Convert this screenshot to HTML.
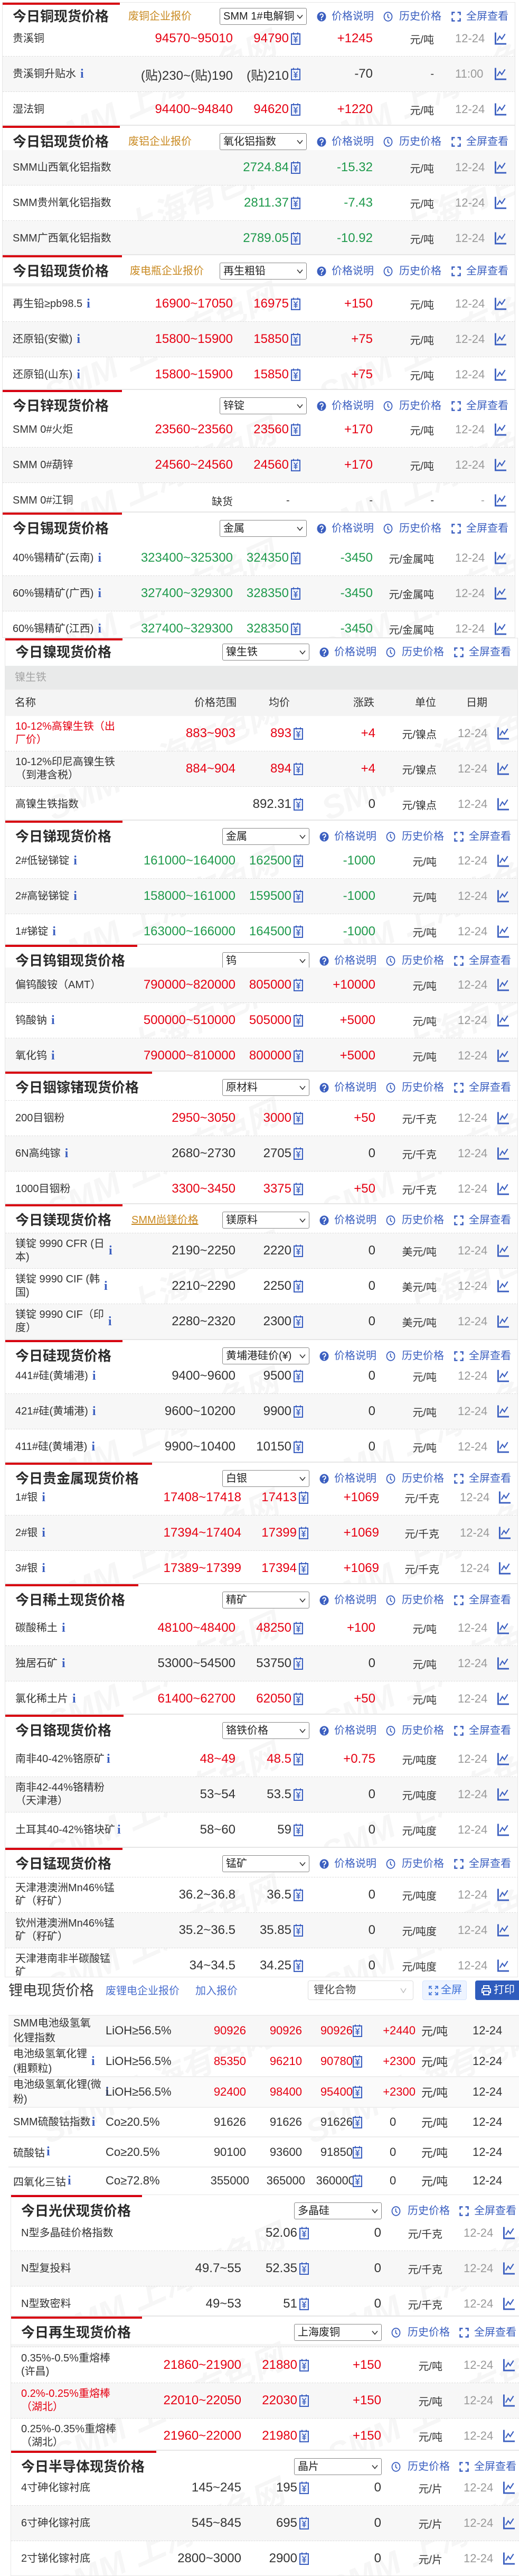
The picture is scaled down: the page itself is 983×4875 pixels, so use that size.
<!DOCTYPE html>
<html><head><meta charset="utf-8">
<style>
*{margin:0;padding:0;box-sizing:border-box}
html,body{width:983px;height:4875px;overflow:hidden;background:#fff}
body{position:relative;font-family:"Liberation Sans","Noto Sans CJK SC",sans-serif;color:#333}
.sec{position:absolute;width:972px;border:1px solid #e6e6e6;overflow:hidden;background:#fff}
.red{position:absolute;left:0;top:0;height:4px;background:#d7000f}
.tt{position:absolute;left:19px;top:12px;font-weight:bold;font-size:26px;line-height:36px;color:#2b2b2b;white-space:nowrap}
.lk{position:absolute;left:238px;top:17px;font-size:20px;line-height:26px;color:#c98a22;white-space:nowrap}
.sel{position:absolute;left:411px;top:14px;width:165px;height:32px;border:1px solid #888;border-radius:3px;font-size:20px;line-height:30px;padding-left:6px;color:#222;white-space:nowrap;overflow:hidden;background:#fff}
.sel svg{position:absolute;right:6px;top:11px;width:12px;height:9px}
.hl{position:absolute;top:17px;font-size:20px;line-height:26px;color:#3b5fc0;white-space:nowrap}
.hi{position:absolute;top:21px;width:18px;height:19px}
.rw{position:absolute;left:0;width:972px;height:67px;border-bottom:1px dashed #dcdcdc}
.gr{background:#f7f7f7}
.c{position:absolute;top:0;height:100%;display:flex;align-items:center;white-space:nowrap}
.nm{left:19px;font-size:20px;line-height:25px;color:#333}
.rg{right:536px;font-size:24px}
.av{right:430px;font-size:24px}
.yi{left:546px}
.ch{right:271px;font-size:24px}
.un{right:155px;font-size:20px;color:#333}
.dt{left:857px;font-size:22px;color:#999}
.gi{left:931px}
.yy{width:18px;height:24px}
.gg{width:23px;height:26px}
.R .rg,.R .av,.R .ch{color:#e60012}
.G .rg,.G .av,.G .ch{color:#1f9a4c}
.K .rg,.K .av,.K .ch{color:#333}
.ii{font-family:"Liberation Serif",serif;font-weight:bold;font-size:24px;color:#3b5fc0;margin-left:8px}
.wm{position:absolute;font-weight:bold;font-style:italic;font-size:62px;color:rgba(0,0,0,0.035);transform:rotate(-24deg);white-space:nowrap;pointer-events:none}
.li{position:absolute;white-space:nowrap}
.lr{position:absolute;left:16px;width:967px;border-bottom:2px solid #eee}
.lr .c{font-size:22px}
</style></head><body>
<svg width="0" height="0" style="position:absolute">
<defs>
<symbol id="ch" viewBox="0 0 24 26"><path d="M2.5 1V23.5H24" fill="none" stroke="#3b5fc0" stroke-width="3"/><path d="M6 17L11 8.5L15 14L21.5 4" fill="none" stroke="#3b5fc0" stroke-width="2.2"/></symbol>
<symbol id="yn" viewBox="0 0 18 24"><rect x="1" y="3" width="16" height="20" fill="#eef2fb" stroke="#3b5fc0" stroke-width="2"/><path d="M5 0.5v4M13 0.5v4" stroke="#3b5fc0" stroke-width="2"/><path d="M5.5 7.5L9 12L12.5 7.5M9 12v8M5.5 13.5h7M5.5 16.5h7" fill="none" stroke="#3b5fc0" stroke-width="1.6"/></symbol>
<symbol id="q" viewBox="0 0 18 19"><ellipse cx="9" cy="9.5" rx="8.5" ry="9" fill="#3b5fc0"/><path d="M6.3 7.2a2.8 2.8 0 1 1 4 2.5c-.9.5-1.3 1-1.3 2v.8" fill="none" stroke="#fff" stroke-width="2"/><circle cx="9" cy="15" r="1.3" fill="#fff"/></symbol>
<symbol id="ck" viewBox="0 0 18 19"><ellipse cx="9" cy="9.5" rx="7.5" ry="8.3" fill="none" stroke="#3b5fc0" stroke-width="1.8"/><path d="M8.5 4.5v5.5l3 2.5" fill="none" stroke="#3b5fc0" stroke-width="1.8"/></symbol>
<symbol id="fs" viewBox="0 0 18 19"><path d="M1.5 6.5V1.5h5M11.5 1.5h5v5M16.5 12.5v5h-5M6.5 17.5h-5v-5" fill="none" stroke="#3b5fc0" stroke-width="2.6"/></symbol>
<symbol id="dn" viewBox="0 0 12 9"><path d="M1 1.5L6 7.5L11 1.5" fill="none" stroke="#333" stroke-width="1.6"/></symbol>
</defs></svg>

<!-- 1 Copper -->
<div class="sec" style="top:4px;left:4px;height:233px">
<div class="wm" style="left:60px;top:120px">SMM 上海有色网</div><div class="wm" style="left:580px;top:120px">SMM 上海有色网</div>
<div class="red" style="width:222px"></div>
<div class="tt" style="top:8px">今日铜现货价格</div>
<div class="lk" style="top:13px">废铜企业报价</div>
<div class="sel" style="top:10px">SMM 1#电解铜<svg><use href="#dn"/></svg></div>
<svg class="hi" style="left:595px;top:17px"><use href="#q"/></svg><div class="hl" style="left:623px;top:13px">价格说明</div>
<svg class="hi" style="left:721px;top:17px"><use href="#ck"/></svg><div class="hl" style="left:751px;top:13px">历史价格</div>
<svg class="hi" style="left:850px;top:17px"><use href="#fs"/></svg><div class="hl" style="left:878px;top:13px">全屏查看</div>
<div class="rw R" style="top:35px"><div class="c nm">贵溪铜</div><div class="c rg">94570~95010</div><div class="c av">94790</div><div class="c yi"><svg class="yy"><use href="#yn"/></svg></div><div class="c ch">+1245</div><div class="c un">元/吨</div><div class="c dt">12-24</div><div class="c gi"><svg class="gg"><use href="#ch"/></svg></div></div>
<div class="rw K gr" style="top:102px"><div class="c nm">贵溪铜升贴水<b class="ii">i</b></div><div class="c rg">(贴)230~(贴)190</div><div class="c av">(贴)210</div><div class="c yi"><svg class="yy"><use href="#yn"/></svg></div><div class="c ch">-70</div><div class="c un">-</div><div class="c dt">11:00</div><div class="c gi"><svg class="gg"><use href="#ch"/></svg></div></div>
<div class="rw R" style="top:169px"><div class="c nm">湿法铜</div><div class="c rg">94400~94840</div><div class="c av">94620</div><div class="c yi"><svg class="yy"><use href="#yn"/></svg></div><div class="c ch">+1220</div><div class="c un">元/吨</div><div class="c dt">12-24</div><div class="c gi"><svg class="gg"><use href="#ch"/></svg></div></div>
</div>

<!-- 2 Al -->
<div class="sec" style="top:237px;left:4px;height:245px">
<div class="wm" style="left:60px;top:120px">SMM 上海有色网</div><div class="wm" style="left:580px;top:120px">SMM 上海有色网</div>
<div class="red" style="width:222px"></div>
<div class="tt">今日铝现货价格</div>
<div class="lk">废铝企业报价</div>
<div class="sel">氧化铝指数<svg><use href="#dn"/></svg></div>
<svg class="hi" style="left:595px"><use href="#q"/></svg><div class="hl" style="left:623px">价格说明</div>
<svg class="hi" style="left:721px"><use href="#ck"/></svg><div class="hl" style="left:751px">历史价格</div>
<svg class="hi" style="left:850px"><use href="#fs"/></svg><div class="hl" style="left:878px">全屏查看</div>
<div class="rw G gr" style="top:46px"><div class="c nm">SMM山西氧化铝指数</div><div class="c av">2724.84</div><div class="c yi"><svg class="yy"><use href="#yn"/></svg></div><div class="c ch">-15.32</div><div class="c un">元/吨</div><div class="c dt">12-24</div><div class="c gi"><svg class="gg"><use href="#ch"/></svg></div></div>
<div class="rw G" style="top:113px"><div class="c nm">SMM贵州氧化铝指数</div><div class="c av">2811.37</div><div class="c yi"><svg class="yy"><use href="#yn"/></svg></div><div class="c ch">-7.43</div><div class="c un">元/吨</div><div class="c dt">12-24</div><div class="c gi"><svg class="gg"><use href="#ch"/></svg></div></div>
<div class="rw G gr" style="top:180px"><div class="c nm">SMM广西氧化铝指数</div><div class="c av">2789.05</div><div class="c yi"><svg class="yy"><use href="#yn"/></svg></div><div class="c ch">-10.92</div><div class="c un">元/吨</div><div class="c dt">12-24</div><div class="c gi"><svg class="gg"><use href="#ch"/></svg></div></div>
</div>

<!-- 3 Lead -->
<div class="sec" style="top:482px;left:4px;height:255px">
<div class="wm" style="left:60px;top:120px">SMM 上海有色网</div><div class="wm" style="left:580px;top:120px">SMM 上海有色网</div>
<div class="red" style="width:226px"></div>
<div class="tt">今日铅现货价格</div>
<div class="lk" style="left:241px">废电瓶企业报价</div>
<div class="sel">再生粗铅<svg><use href="#dn"/></svg></div>
<svg class="hi" style="left:595px"><use href="#q"/></svg><div class="hl" style="left:623px">价格说明</div>
<svg class="hi" style="left:721px"><use href="#ck"/></svg><div class="hl" style="left:751px">历史价格</div>
<svg class="hi" style="left:850px"><use href="#fs"/></svg><div class="hl" style="left:878px">全屏查看</div>
<div style="position:absolute;left:0;top:53px;width:972px;height:6px;background:#f2f2f2"></div>
<div class="rw R" style="top:59px"><div class="c nm">再生铅≥pb98.5<b class="ii">i</b></div><div class="c rg">16900~17050</div><div class="c av">16975</div><div class="c yi"><svg class="yy"><use href="#yn"/></svg></div><div class="c ch">+150</div><div class="c un">元/吨</div><div class="c dt">12-24</div><div class="c gi"><svg class="gg"><use href="#ch"/></svg></div></div>
<div class="rw R gr" style="top:126px"><div class="c nm">还原铅(安徽)<b class="ii">i</b></div><div class="c rg">15800~15900</div><div class="c av">15850</div><div class="c yi"><svg class="yy"><use href="#yn"/></svg></div><div class="c ch">+75</div><div class="c un">元/吨</div><div class="c dt">12-24</div><div class="c gi"><svg class="gg"><use href="#ch"/></svg></div></div>
<div class="rw R" style="top:193px"><div class="c nm">还原铅(山东)<b class="ii">i</b></div><div class="c rg">15800~15900</div><div class="c av">15850</div><div class="c yi"><svg class="yy"><use href="#yn"/></svg></div><div class="c ch">+75</div><div class="c un">元/吨</div><div class="c dt">12-24</div><div class="c gi"><svg class="gg"><use href="#ch"/></svg></div></div>
</div>

<!-- 4 Zinc -->
<div class="sec" style="top:737px;left:4px;height:232px">
<div class="wm" style="left:60px;top:120px">SMM 上海有色网</div><div class="wm" style="left:580px;top:120px">SMM 上海有色网</div>
<div class="red" style="width:226px"></div>
<div class="tt">今日锌现货价格</div>
<div class="sel">锌锭<svg><use href="#dn"/></svg></div>
<svg class="hi" style="left:595px"><use href="#q"/></svg><div class="hl" style="left:623px">价格说明</div>
<svg class="hi" style="left:721px"><use href="#ck"/></svg><div class="hl" style="left:751px">历史价格</div>
<svg class="hi" style="left:850px"><use href="#fs"/></svg><div class="hl" style="left:878px">全屏查看</div>
<div class="rw R" style="top:42px"><div class="c nm">SMM 0#火炬</div><div class="c rg">23560~23560</div><div class="c av">23560</div><div class="c yi"><svg class="yy"><use href="#yn"/></svg></div><div class="c ch">+170</div><div class="c un">元/吨</div><div class="c dt">12-24</div><div class="c gi"><svg class="gg"><use href="#ch"/></svg></div></div>
<div class="rw R gr" style="top:109px"><div class="c nm">SMM 0#葫锌</div><div class="c rg">24560~24560</div><div class="c av">24560</div><div class="c yi"><svg class="yy"><use href="#yn"/></svg></div><div class="c ch">+170</div><div class="c un">元/吨</div><div class="c dt">12-24</div><div class="c gi"><svg class="gg"><use href="#ch"/></svg></div></div>
<div class="rw K" style="top:176px"><div class="c nm">SMM 0#江铜</div><div class="c rg" style="font-size:20px">缺货</div><div class="c" style="left:537px;font-size:20px">-</div><div class="c ch" style="font-size:20px">-</div><div class="c un">-</div><div class="c" style="left:906px;font-size:20px;color:#999">-</div><div class="c gi"><svg class="gg"><use href="#ch"/></svg></div></div>
</div>

<!-- 5 Tin -->
<div class="sec" style="top:969px;left:4px;height:238px">
<div class="wm" style="left:60px;top:120px">SMM 上海有色网</div><div class="wm" style="left:580px;top:120px">SMM 上海有色网</div>
<div class="red" style="width:226px"></div>
<div class="tt">今日锡现货价格</div>
<div class="sel">金属<svg><use href="#dn"/></svg></div>
<svg class="hi" style="left:595px"><use href="#q"/></svg><div class="hl" style="left:623px">价格说明</div>
<svg class="hi" style="left:721px"><use href="#ck"/></svg><div class="hl" style="left:751px">历史价格</div>
<svg class="hi" style="left:850px"><use href="#fs"/></svg><div class="hl" style="left:878px">全屏查看</div>
<div class="rw G" style="top:53px"><div class="c nm">40%锡精矿(云南)<b class="ii">i</b></div><div class="c rg">323400~325300</div><div class="c av">324350</div><div class="c yi"><svg class="yy"><use href="#yn"/></svg></div><div class="c ch">-3450</div><div class="c un">元/金属吨</div><div class="c dt">12-24</div><div class="c gi"><svg class="gg"><use href="#ch"/></svg></div></div>
<div class="rw G gr" style="top:120px"><div class="c nm">60%锡精矿(广西)<b class="ii">i</b></div><div class="c rg">327400~329300</div><div class="c av">328350</div><div class="c yi"><svg class="yy"><use href="#yn"/></svg></div><div class="c ch">-3450</div><div class="c un">元/金属吨</div><div class="c dt">12-24</div><div class="c gi"><svg class="gg"><use href="#ch"/></svg></div></div>
<div class="rw G" style="top:187px"><div class="c nm">60%锡精矿(江西)<b class="ii">i</b></div><div class="c rg">327400~329300</div><div class="c av">328350</div><div class="c yi"><svg class="yy"><use href="#yn"/></svg></div><div class="c ch">-3450</div><div class="c un">元/金属吨</div><div class="c dt">12-24</div><div class="c gi"><svg class="gg"><use href="#ch"/></svg></div></div>
</div>

<!-- 6 Ni -->
<div class="sec" style="top:1207px;left:9px;height:345px">
<div class="wm" style="left:60px;top:180px">SMM 上海有色网</div><div class="wm" style="left:580px;top:180px">SMM 上海有色网</div>
<div class="red" style="width:222px"></div>
<div class="tt" style="top:8px">今日镍现货价格</div>
<div class="sel" style="top:10px">镍生铁<svg><use href="#dn"/></svg></div>
<svg class="hi" style="left:595px;top:17px"><use href="#q"/></svg><div class="hl" style="left:623px;top:13px">价格说明</div>
<svg class="hi" style="left:721px;top:17px"><use href="#ck"/></svg><div class="hl" style="left:751px;top:13px">历史价格</div>
<svg class="hi" style="left:850px;top:17px"><use href="#fs"/></svg><div class="hl" style="left:878px;top:13px">全屏查看</div>
<div style="position:absolute;left:0;top:52px;width:972px;height:45px;background:#e9eaea;font-size:20px;line-height:45px;color:#a5a5a5;padding-left:18px">镍生铁</div>
<div style="position:absolute;left:0;top:97px;width:972px;height:50px;background:#f4f4f4;font-size:20px;line-height:50px;color:#333">
<span style="position:absolute;left:18px">名称</span><span style="position:absolute;left:358px">价格范围</span><span style="position:absolute;left:499px">均价</span><span style="position:absolute;left:659px">涨跌</span><span style="position:absolute;left:776px">单位</span><span style="position:absolute;left:873px">日期</span></div>
<div class="rw R" style="top:147px"><div class="c nm" style="color:#e60012">10-12%高镍生铁（出<br>厂价）</div><div class="c rg">883~903</div><div class="c av">893</div><div class="c yi"><svg class="yy"><use href="#yn"/></svg></div><div class="c ch">+4</div><div class="c un">元/镍点</div><div class="c dt">12-24</div><div class="c gi"><svg class="gg"><use href="#ch"/></svg></div></div>
<div class="rw R gr" style="top:214px"><div class="c nm">10-12%印尼高镍生铁<br>（到港含税）</div><div class="c rg">884~904</div><div class="c av">894</div><div class="c yi"><svg class="yy"><use href="#yn"/></svg></div><div class="c ch">+4</div><div class="c un">元/镍点</div><div class="c dt">12-24</div><div class="c gi"><svg class="gg"><use href="#ch"/></svg></div></div>
<div class="rw K" style="top:281px"><div class="c nm">高镍生铁指数</div><div class="c av">892.31</div><div class="c yi"><svg class="yy"><use href="#yn"/></svg></div><div class="c ch">0</div><div class="c un">元/镍点</div><div class="c dt">12-24</div><div class="c gi"><svg class="gg"><use href="#ch"/></svg></div></div>
</div>

<!-- 7 Sb -->
<div class="sec" style="top:1552px;left:9px;height:235px">
<div class="wm" style="left:60px;top:120px">SMM 上海有色网</div><div class="wm" style="left:580px;top:120px">SMM 上海有色网</div>
<div class="red" style="width:222px"></div>
<div class="tt">今日锑现货价格</div>
<div class="sel">金属<svg><use href="#dn"/></svg></div>
<svg class="hi" style="left:595px"><use href="#q"/></svg><div class="hl" style="left:623px">价格说明</div>
<svg class="hi" style="left:721px"><use href="#ck"/></svg><div class="hl" style="left:751px">历史价格</div>
<svg class="hi" style="left:850px"><use href="#fs"/></svg><div class="hl" style="left:878px">全屏查看</div>
<div class="rw G" style="top:43px"><div class="c nm">2#低铋锑锭<b class="ii">i</b></div><div class="c rg">161000~164000</div><div class="c av">162500</div><div class="c yi"><svg class="yy"><use href="#yn"/></svg></div><div class="c ch">-1000</div><div class="c un">元/吨</div><div class="c dt">12-24</div><div class="c gi"><svg class="gg"><use href="#ch"/></svg></div></div>
<div class="rw G gr" style="top:110px"><div class="c nm">2#高铋锑锭<b class="ii">i</b></div><div class="c rg">158000~161000</div><div class="c av">159500</div><div class="c yi"><svg class="yy"><use href="#yn"/></svg></div><div class="c ch">-1000</div><div class="c un">元/吨</div><div class="c dt">12-24</div><div class="c gi"><svg class="gg"><use href="#ch"/></svg></div></div>
<div class="rw G" style="top:177px"><div class="c nm">1#锑锭<b class="ii">i</b></div><div class="c rg">163000~166000</div><div class="c av">164500</div><div class="c yi"><svg class="yy"><use href="#yn"/></svg></div><div class="c ch">-1000</div><div class="c un">元/吨</div><div class="c dt">12-24</div><div class="c gi"><svg class="gg"><use href="#ch"/></svg></div></div>
</div>

<!-- 8 W -->
<div class="sec" style="top:1787px;left:9px;height:240px">
<div class="wm" style="left:60px;top:120px">SMM 上海有色网</div><div class="wm" style="left:580px;top:120px">SMM 上海有色网</div>
<div class="red" style="width:250px"></div>
<div class="tt">今日钨钼现货价格</div>
<div class="sel">钨<svg><use href="#dn"/></svg></div>
<svg class="hi" style="left:595px"><use href="#q"/></svg><div class="hl" style="left:623px">价格说明</div>
<svg class="hi" style="left:721px"><use href="#ck"/></svg><div class="hl" style="left:751px">历史价格</div>
<svg class="hi" style="left:850px"><use href="#fs"/></svg><div class="hl" style="left:878px">全屏查看</div>
<div class="rw R gr" style="top:43px"><div class="c nm">偏钨酸铵（AMT）</div><div class="c rg">790000~820000</div><div class="c av">805000</div><div class="c yi"><svg class="yy"><use href="#yn"/></svg></div><div class="c ch">+10000</div><div class="c un">元/吨</div><div class="c dt">12-24</div><div class="c gi"><svg class="gg"><use href="#ch"/></svg></div></div>
<div class="rw R" style="top:110px"><div class="c nm">钨酸钠<b class="ii">i</b></div><div class="c rg">500000~510000</div><div class="c av">505000</div><div class="c yi"><svg class="yy"><use href="#yn"/></svg></div><div class="c ch">+5000</div><div class="c un">元/吨</div><div class="c dt">12-24</div><div class="c gi"><svg class="gg"><use href="#ch"/></svg></div></div>
<div class="rw R gr" style="top:177px"><div class="c nm">氧化钨<b class="ii">i</b></div><div class="c rg">790000~810000</div><div class="c av">800000</div><div class="c yi"><svg class="yy"><use href="#yn"/></svg></div><div class="c ch">+5000</div><div class="c un">元/吨</div><div class="c dt">12-24</div><div class="c gi"><svg class="gg"><use href="#ch"/></svg></div></div>
</div>

<!-- 9 In -->
<div class="sec" style="top:2027px;left:9px;height:251px">
<div class="wm" style="left:60px;top:120px">SMM 上海有色网</div><div class="wm" style="left:580px;top:120px">SMM 上海有色网</div>
<div class="red" style="width:278px"></div>
<div class="tt">今日铟镓锗现货价格</div>
<div class="sel">原材料<svg><use href="#dn"/></svg></div>
<svg class="hi" style="left:595px"><use href="#q"/></svg><div class="hl" style="left:623px">价格说明</div>
<svg class="hi" style="left:721px"><use href="#ck"/></svg><div class="hl" style="left:751px">历史价格</div>
<svg class="hi" style="left:850px"><use href="#fs"/></svg><div class="hl" style="left:878px">全屏查看</div>
<div style="position:absolute;left:0;top:54px;width:972px;border-top:1px dashed #dcdcdc"></div>
<div class="rw R" style="top:55px"><div class="c nm">200目铟粉</div><div class="c rg">2950~3050</div><div class="c av">3000</div><div class="c yi"><svg class="yy"><use href="#yn"/></svg></div><div class="c ch">+50</div><div class="c un">元/千克</div><div class="c dt">12-24</div><div class="c gi"><svg class="gg"><use href="#ch"/></svg></div></div>
<div class="rw K gr" style="top:122px"><div class="c nm">6N高纯镓<b class="ii">i</b></div><div class="c rg">2680~2730</div><div class="c av">2705</div><div class="c yi"><svg class="yy"><use href="#yn"/></svg></div><div class="c ch">0</div><div class="c un">元/千克</div><div class="c dt">12-24</div><div class="c gi"><svg class="gg"><use href="#ch"/></svg></div></div>
<div class="rw R" style="top:189px"><div class="c nm">1000目铟粉</div><div class="c rg">3300~3450</div><div class="c av">3375</div><div class="c yi"><svg class="yy"><use href="#yn"/></svg></div><div class="c ch">+50</div><div class="c un">元/千克</div><div class="c dt">12-24</div><div class="c gi"><svg class="gg"><use href="#ch"/></svg></div></div>
</div>

<!-- 10 Mg -->
<div class="sec" style="top:2278px;left:9px;height:257px">
<div class="wm" style="left:60px;top:120px">SMM 上海有色网</div><div class="wm" style="left:580px;top:120px">SMM 上海有色网</div>
<div class="red" style="width:222px"></div>
<div class="tt">今日镁现货价格</div>
<div class="lk" style="left:239px;text-decoration:underline">SMM尚镁价格</div>
<div class="sel">镁原料<svg><use href="#dn"/></svg></div>
<svg class="hi" style="left:595px"><use href="#q"/></svg><div class="hl" style="left:623px">价格说明</div>
<svg class="hi" style="left:721px"><use href="#ck"/></svg><div class="hl" style="left:751px">历史价格</div>
<svg class="hi" style="left:850px"><use href="#fs"/></svg><div class="hl" style="left:878px">全屏查看</div>
<div style="position:absolute;left:0;top:54px;width:972px;border-top:1px dashed #dcdcdc"></div>
<div class="rw K gr" style="top:55px"><div class="c nm">镁锭 9990 CFR (日<br>本)<b class="ii">i</b></div><div class="c rg">2190~2250</div><div class="c av">2220</div><div class="c yi"><svg class="yy"><use href="#yn"/></svg></div><div class="c ch">0</div><div class="c un">美元/吨</div><div class="c dt">12-24</div><div class="c gi"><svg class="gg"><use href="#ch"/></svg></div></div>
<div class="rw K" style="top:122px"><div class="c nm">镁锭 9990 CIF (韩<br>国)<b class="ii">i</b></div><div class="c rg">2210~2290</div><div class="c av">2250</div><div class="c yi"><svg class="yy"><use href="#yn"/></svg></div><div class="c ch">0</div><div class="c un">美元/吨</div><div class="c dt">12-24</div><div class="c gi"><svg class="gg"><use href="#ch"/></svg></div></div>
<div class="rw K gr" style="top:189px"><div class="c nm">镁锭 9990 CIF（印<br>度）<b class="ii">i</b></div><div class="c rg">2280~2320</div><div class="c av">2300</div><div class="c yi"><svg class="yy"><use href="#yn"/></svg></div><div class="c ch">0</div><div class="c un">美元/吨</div><div class="c dt">12-24</div><div class="c gi"><svg class="gg"><use href="#ch"/></svg></div></div>
</div>

<!-- 11 Si -->
<div class="sec" style="top:2535px;left:9px;height:232px">
<div class="wm" style="left:60px;top:120px">SMM 上海有色网</div><div class="wm" style="left:580px;top:120px">SMM 上海有色网</div>
<div class="red" style="width:222px"></div>
<div class="tt">今日硅现货价格</div>
<div class="sel">黄埔港硅价(¥)<svg><use href="#dn"/></svg></div>
<svg class="hi" style="left:595px"><use href="#q"/></svg><div class="hl" style="left:623px">价格说明</div>
<svg class="hi" style="left:721px"><use href="#ck"/></svg><div class="hl" style="left:751px">历史价格</div>
<svg class="hi" style="left:850px"><use href="#fs"/></svg><div class="hl" style="left:878px">全屏查看</div>
<div class="rw K" style="top:35px"><div class="c nm">441#硅(黄埔港)<b class="ii">i</b></div><div class="c rg">9400~9600</div><div class="c av">9500</div><div class="c yi"><svg class="yy"><use href="#yn"/></svg></div><div class="c ch">0</div><div class="c un">元/吨</div><div class="c dt">12-24</div><div class="c gi"><svg class="gg"><use href="#ch"/></svg></div></div>
<div class="rw K gr" style="top:102px"><div class="c nm">421#硅(黄埔港)<b class="ii">i</b></div><div class="c rg">9600~10200</div><div class="c av">9900</div><div class="c yi"><svg class="yy"><use href="#yn"/></svg></div><div class="c ch">0</div><div class="c un">元/吨</div><div class="c dt">12-24</div><div class="c gi"><svg class="gg"><use href="#ch"/></svg></div></div>
<div class="rw K" style="top:169px"><div class="c nm">411#硅(黄埔港)<b class="ii">i</b></div><div class="c rg">9900~10400</div><div class="c av">10150</div><div class="c yi"><svg class="yy"><use href="#yn"/></svg></div><div class="c ch">0</div><div class="c un">元/吨</div><div class="c dt">12-24</div><div class="c gi"><svg class="gg"><use href="#ch"/></svg></div></div>
</div>

<!-- 12 Ag -->
<div class="sec" style="top:2767px;left:9px;height:230px">
<div class="wm" style="left:60px;top:120px">SMM 上海有色网</div><div class="wm" style="left:580px;top:120px">SMM 上海有色网</div>
<div class="red" style="width:278px"></div>
<div class="tt">今日贵金属现货价格</div>
<div class="sel">白银<svg><use href="#dn"/></svg></div>
<svg class="hi" style="left:595px"><use href="#q"/></svg><div class="hl" style="left:623px">价格说明</div>
<svg class="hi" style="left:721px"><use href="#ck"/></svg><div class="hl" style="left:751px">历史价格</div>
<svg class="hi" style="left:850px"><use href="#fs"/></svg><div class="hl" style="left:878px">全屏查看</div>
<div class="rw R" style="top:33px"><div class="c nm">1#银<b class="ii">i</b></div><div class="c rg" style="right:525px">17408~17418</div><div class="c av" style="right:420px">17413</div><div class="c yi" style="left:556px"><svg class="yy"><use href="#yn"/></svg></div><div class="c ch" style="right:264px">+1069</div><div class="c un" style="right:150px">元/千克</div><div class="c dt" style="left:861px">12-24</div><div class="c gi" style="left:934px"><svg class="gg"><use href="#ch"/></svg></div></div>
<div class="rw R gr" style="top:100px"><div class="c nm">2#银<b class="ii">i</b></div><div class="c rg" style="right:525px">17394~17404</div><div class="c av" style="right:420px">17399</div><div class="c yi" style="left:556px"><svg class="yy"><use href="#yn"/></svg></div><div class="c ch" style="right:264px">+1069</div><div class="c un" style="right:150px">元/千克</div><div class="c dt" style="left:861px">12-24</div><div class="c gi" style="left:934px"><svg class="gg"><use href="#ch"/></svg></div></div>
<div class="rw R" style="top:167px"><div class="c nm">3#银<b class="ii">i</b></div><div class="c rg" style="right:525px">17389~17399</div><div class="c av" style="right:420px">17394</div><div class="c yi" style="left:556px"><svg class="yy"><use href="#yn"/></svg></div><div class="c ch" style="right:264px">+1069</div><div class="c un" style="right:150px">元/千克</div><div class="c dt" style="left:861px">12-24</div><div class="c gi" style="left:934px"><svg class="gg"><use href="#ch"/></svg></div></div>
</div>

<!-- 13 RE -->
<div class="sec" style="top:2997px;left:9px;height:247px">
<div class="wm" style="left:60px;top:120px">SMM 上海有色网</div><div class="wm" style="left:580px;top:120px">SMM 上海有色网</div>
<div class="red" style="width:252px"></div>
<div class="tt">今日稀土现货价格</div>
<div class="sel">精矿<svg><use href="#dn"/></svg></div>
<svg class="hi" style="left:595px"><use href="#q"/></svg><div class="hl" style="left:623px">价格说明</div>
<svg class="hi" style="left:721px"><use href="#ck"/></svg><div class="hl" style="left:751px">历史价格</div>
<svg class="hi" style="left:850px"><use href="#fs"/></svg><div class="hl" style="left:878px">全屏查看</div>
<div class="rw R" style="top:50px"><div class="c nm">碳酸稀土<b class="ii">i</b></div><div class="c rg">48100~48400</div><div class="c av">48250</div><div class="c yi"><svg class="yy"><use href="#yn"/></svg></div><div class="c ch">+100</div><div class="c un">元/吨</div><div class="c dt">12-24</div><div class="c gi"><svg class="gg"><use href="#ch"/></svg></div></div>
<div class="rw K gr" style="top:117px"><div class="c nm">独居石矿<b class="ii">i</b></div><div class="c rg">53000~54500</div><div class="c av">53750</div><div class="c yi"><svg class="yy"><use href="#yn"/></svg></div><div class="c ch">0</div><div class="c un">元/吨</div><div class="c dt">12-24</div><div class="c gi"><svg class="gg"><use href="#ch"/></svg></div></div>
<div class="rw R" style="top:184px"><div class="c nm">氯化稀土片<b class="ii">i</b></div><div class="c rg">61400~62700</div><div class="c av">62050</div><div class="c yi"><svg class="yy"><use href="#yn"/></svg></div><div class="c ch">+50</div><div class="c un">元/吨</div><div class="c dt">12-24</div><div class="c gi"><svg class="gg"><use href="#ch"/></svg></div></div>
</div>

<!-- 14 Cr -->
<div class="sec" style="top:3244px;left:9px;height:252px">
<div class="wm" style="left:60px;top:120px">SMM 上海有色网</div><div class="wm" style="left:580px;top:120px">SMM 上海有色网</div>
<div class="red" style="width:224px"></div>
<div class="tt">今日铬现货价格</div>
<div class="sel">铬铁价格<svg><use href="#dn"/></svg></div>
<svg class="hi" style="left:595px"><use href="#q"/></svg><div class="hl" style="left:623px">价格说明</div>
<svg class="hi" style="left:721px"><use href="#ck"/></svg><div class="hl" style="left:751px">历史价格</div>
<svg class="hi" style="left:850px"><use href="#fs"/></svg><div class="hl" style="left:878px">全屏查看</div>
<div class="rw R" style="top:51px"><div class="c nm">南非40-42%铬原矿<br><b class="ii" style="margin-left:4px">i</b></div><div class="c rg">48~49</div><div class="c av">48.5</div><div class="c yi"><svg class="yy"><use href="#yn"/></svg></div><div class="c ch">+0.75</div><div class="c un">元/吨度</div><div class="c dt">12-24</div><div class="c gi"><svg class="gg"><use href="#ch"/></svg></div></div>
<div class="rw K gr" style="top:118px"><div class="c nm">南非42-44%铬精粉<br>（天津港）</div><div class="c rg">53~54</div><div class="c av">53.5</div><div class="c yi"><svg class="yy"><use href="#yn"/></svg></div><div class="c ch">0</div><div class="c un">元/吨度</div><div class="c dt">12-24</div><div class="c gi"><svg class="gg"><use href="#ch"/></svg></div></div>
<div class="rw K" style="top:185px"><div class="c nm">土耳其40-42%铬块矿<br><b class="ii" style="margin-left:4px">i</b></div><div class="c rg">58~60</div><div class="c av">59</div><div class="c yi"><svg class="yy"><use href="#yn"/></svg></div><div class="c ch">0</div><div class="c un">元/吨度</div><div class="c dt">12-24</div><div class="c gi"><svg class="gg"><use href="#ch"/></svg></div></div>
</div>

<!-- 15 Mn -->
<div class="sec" style="top:3496px;left:9px;height:246px">
<div class="wm" style="left:60px;top:120px">SMM 上海有色网</div><div class="wm" style="left:580px;top:120px">SMM 上海有色网</div>
<div class="red" style="width:222px"></div>
<div class="tt">今日锰现货价格</div>
<div class="sel">锰矿<svg><use href="#dn"/></svg></div>
<svg class="hi" style="left:595px"><use href="#q"/></svg><div class="hl" style="left:623px">价格说明</div>
<svg class="hi" style="left:721px"><use href="#ck"/></svg><div class="hl" style="left:751px">历史价格</div>
<svg class="hi" style="left:850px"><use href="#fs"/></svg><div class="hl" style="left:878px">全屏查看</div>
<div style="position:absolute;left:0;top:55px;width:972px;border-top:1px dashed #dcdcdc"></div>
<div class="rw K" style="top:56px"><div class="c nm">天津港澳洲Mn46%锰<br>矿（籽矿）</div><div class="c rg">36.2~36.8</div><div class="c av">36.5</div><div class="c yi"><svg class="yy"><use href="#yn"/></svg></div><div class="c ch">0</div><div class="c un">元/吨度</div><div class="c dt">12-24</div><div class="c gi"><svg class="gg"><use href="#ch"/></svg></div></div>
<div class="rw K gr" style="top:123px"><div class="c nm">钦州港澳洲Mn46%锰<br>矿（籽矿）</div><div class="c rg">35.2~36.5</div><div class="c av">35.85</div><div class="c yi"><svg class="yy"><use href="#yn"/></svg></div><div class="c ch">0</div><div class="c un">元/吨度</div><div class="c dt">12-24</div><div class="c gi"><svg class="gg"><use href="#ch"/></svg></div></div>
<div class="rw K" style="top:190px"><div class="c nm">天津港南非半碳酸锰<br>矿</div><div class="c rg">34~34.5</div><div class="c av">34.25</div><div class="c yi"><svg class="yy"><use href="#yn"/></svg></div><div class="c ch">0</div><div class="c un">元/吨度</div><div class="c dt">12-24</div><div class="c gi"><svg class="gg"><use href="#ch"/></svg></div></div>
</div>

<!-- 16 Lithium -->
<div style="position:absolute;top:3742px;left:0;width:983px;height:411px;overflow:hidden;background:#fff">
<div class="wm" style="left:60px;top:150px">SMM 上海有色网</div><div class="wm" style="left:560px;top:150px">SMM 上海有色网</div>
<div class="li" style="left:16px;top:7px;font-size:27px;line-height:36px;color:#333">锂电现货价格</div>
<div class="li" style="left:200px;top:13px;font-size:20px;line-height:26px;color:#4a6fcf">废锂电企业报价</div>
<div class="li" style="left:370px;top:13px;font-size:20px;line-height:26px;color:#4a6fcf">加入报价</div>
<div class="li" style="left:583px;top:6px;width:200px;height:37px;border:1px solid #ddd;border-radius:4px;font-size:20px;line-height:35px;padding-left:10px;color:#444">锂化合物<svg style="position:absolute;right:12px;top:13px;width:12px;height:10px" viewBox="0 0 12 10"><path d="M1 1L6 9L11 1" fill="none" stroke="#bbb" stroke-width="1.4"/></svg></div>
<div class="li" style="left:800px;top:6px;width:84px;height:37px;border:1px solid #d6e4ff;background:#eef4ff;border-radius:4px;font-size:20px;line-height:35px;color:#3b6fd8;padding-left:34px"><svg style="position:absolute;left:11px;top:9px;width:18px;height:18px" viewBox="0 0 18 18"><path d="M1 6V1h5M12 1h5v5M17 12v5h-5M6 17H1v-5M2 2l4 4M16 2l-4 4M16 16l-4-4M2 16l4-4" fill="none" stroke="#3b6fd8" stroke-width="1.6"/></svg>全屏</div>
<div class="li" style="left:900px;top:6px;width:83px;height:37px;background:#2f5cbd;border-radius:4px 0 0 4px;font-size:20px;line-height:37px;color:#fff;padding-left:35px"><svg style="position:absolute;left:12px;top:9px;width:18px;height:19px" viewBox="0 0 18 19"><path d="M4 6V1h10v5M3 6h12a2 2 0 0 1 2 2v6h-3M4 14H1V8a2 2 0 0 1 2-2M4 11h10v7H4z" fill="none" stroke="#fff" stroke-width="2"/></svg>打印</div>
<div style="position:absolute;left:16px;top:60px;width:967px;height:13px;border-bottom:2px solid #eee"></div>
<div class="lr R" style="top:73px;height:58px;background:#f7f7f7"><div class="c" style="left:9px;font-size:20px;line-height:28px;color:#333">SMM电池级氢氧<br>化锂指数</div><div class="c" style="left:184px;color:#333">LiOH≥56.5%</div><div class="c" style="right:517px;color:#e60012">90926</div><div class="c" style="right:411px;color:#e60012">90926</div><div class="c" style="right:315px;color:#e60012">90926</div><div class="c" style="left:652px"><svg class="yy"><use href="#yn"/></svg></div><div class="c" style="right:196px;color:#e60012">+2440</div><div class="c" style="left:782px;color:#333">元/吨</div><div class="c" style="left:879px;color:#333">12-24</div></div>
<div class="lr" style="top:131px;height:58px"><div class="c" style="left:9px;font-size:20px;line-height:28px;color:#333">电池级氢氧化锂<br>(粗颗粒)<b class="ii">i</b></div><div class="c" style="left:184px;color:#333">LiOH≥56.5%</div><div class="c" style="right:517px;color:#e60012">85350</div><div class="c" style="right:411px;color:#e60012">96210</div><div class="c" style="right:315px;color:#e60012">90780</div><div class="c" style="left:652px"><svg class="yy"><use href="#yn"/></svg></div><div class="c" style="right:196px;color:#e60012">+2300</div><div class="c" style="left:782px;color:#333">元/吨</div><div class="c" style="left:879px;color:#333">12-24</div></div>
<div class="lr" style="top:189px;height:58px;background:#fafafa"><div class="c" style="left:9px;font-size:20px;line-height:28px;color:#333">电池级氢氧化锂(微<br>粉)<b class="ii">i</b></div><div class="c" style="left:184px;color:#333">LiOH≥56.5%</div><div class="c" style="right:517px;color:#e60012">92400</div><div class="c" style="right:411px;color:#e60012">98400</div><div class="c" style="right:315px;color:#e60012">95400</div><div class="c" style="left:652px"><svg class="yy"><use href="#yn"/></svg></div><div class="c" style="right:196px;color:#e60012">+2300</div><div class="c" style="left:782px;color:#333">元/吨</div><div class="c" style="left:879px;color:#333">12-24</div></div>
<div class="lr" style="top:247px;height:56px"><div class="c" style="left:9px;font-size:20px;line-height:28px;color:#333">SMM硫酸钴指数<br><b class="ii" style="margin-left:2px">i</b></div><div class="c" style="left:184px;color:#333">Co≥20.5%</div><div class="c" style="right:517px;color:#333">91626</div><div class="c" style="right:411px;color:#333">91626</div><div class="c" style="right:315px;color:#333">91626</div><div class="c" style="left:652px"><svg class="yy"><use href="#yn"/></svg></div><div class="c" style="left:722px;color:#333">0</div><div class="c" style="left:782px;color:#333">元/吨</div><div class="c" style="left:879px;color:#333">12-24</div></div>
<div class="lr" style="top:303px;height:57px"><div class="c" style="left:9px;font-size:20px;color:#333">硫酸钴<b class="ii" style="margin-left:3px">i</b></div><div class="c" style="left:184px;color:#333">Co≥20.5%</div><div class="c" style="right:517px;color:#333">90100</div><div class="c" style="right:411px;color:#333">93600</div><div class="c" style="right:315px;color:#333">91850</div><div class="c" style="left:652px"><svg class="yy"><use href="#yn"/></svg></div><div class="c" style="left:722px;color:#333">0</div><div class="c" style="left:782px;color:#333">元/吨</div><div class="c" style="left:879px;color:#333">12-24</div></div>
<div class="lr" style="top:360px;height:50px;border-bottom:none"><div class="c" style="left:9px;font-size:20px;color:#333">四氧化三钴<b class="ii" style="margin-left:3px">i</b></div><div class="c" style="left:184px;color:#333">Co≥72.8%</div><div class="c" style="right:511px;color:#333">355000</div><div class="c" style="right:405px;color:#333">365000</div><div class="c" style="right:311px;color:#333">360000</div><div class="c" style="left:652px"><svg class="yy"><use href="#yn"/></svg></div><div class="c" style="left:722px;color:#333">0</div><div class="c" style="left:782px;color:#333">元/吨</div><div class="c" style="left:879px;color:#333">12-24</div></div>
</div>

<!-- 17 PV -->
<div class="sec" style="top:4153px;left:20px;height:230px">
<div class="wm" style="left:60px;top:120px">SMM 上海有色网</div><div class="wm" style="left:580px;top:120px">SMM 上海有色网</div>
<div class="red" style="width:248px"></div>
<div class="tt">今日光伏现货价格</div>
<div class="sel" style="left:536px;width:166px">多晶硅<svg><use href="#dn"/></svg></div>
<svg class="hi" style="left:720px"><use href="#ck"/></svg><div class="hl" style="left:751px">历史价格</div>
<svg class="hi" style="left:849px"><use href="#fs"/></svg><div class="hl" style="left:877px">全屏查看</div>
<div class="rw K" style="top:39px"><div class="c nm">N型多晶硅价格指数</div><div class="c av">52.06</div><div class="c yi"><svg class="yy"><use href="#yn"/></svg></div><div class="c ch">0</div><div class="c un">元/千克</div><div class="c dt">12-24</div><div class="c gi"><svg class="gg"><use href="#ch"/></svg></div></div>
<div class="rw K gr" style="top:106px"><div class="c nm">N型复投料</div><div class="c rg">49.7~55</div><div class="c av">52.35</div><div class="c yi"><svg class="yy"><use href="#yn"/></svg></div><div class="c ch">0</div><div class="c un">元/千克</div><div class="c dt">12-24</div><div class="c gi"><svg class="gg"><use href="#ch"/></svg></div></div>
<div class="rw K" style="top:173px"><div class="c nm">N型致密料</div><div class="c rg">49~53</div><div class="c av">51</div><div class="c yi"><svg class="yy"><use href="#yn"/></svg></div><div class="c ch">0</div><div class="c un">元/千克</div><div class="c dt">12-24</div><div class="c gi"><svg class="gg"><use href="#ch"/></svg></div></div>
</div>

<!-- 18 Recycled -->
<div class="sec" style="top:4383px;left:20px;height:254px">
<div class="wm" style="left:60px;top:120px">SMM 上海有色网</div><div class="wm" style="left:580px;top:120px">SMM 上海有色网</div>
<div class="red" style="width:248px"></div>
<div class="tt">今日再生现货价格</div>
<div class="sel" style="left:536px;width:166px">上海废铜<svg><use href="#dn"/></svg></div>
<svg class="hi" style="left:720px"><use href="#ck"/></svg><div class="hl" style="left:751px">历史价格</div>
<svg class="hi" style="left:849px"><use href="#fs"/></svg><div class="hl" style="left:877px">全屏查看</div>
<div style="position:absolute;left:0;top:52px;width:972px;height:6px;background:#f4f4f4;border-bottom:1px dashed #dcdcdc"></div>
<div class="rw R" style="top:59px"><div class="c nm">0.35%-0.5%重熔棒<br>(许昌)</div><div class="c rg">21860~21900</div><div class="c av">21880</div><div class="c yi"><svg class="yy"><use href="#yn"/></svg></div><div class="c ch">+150</div><div class="c un">元/吨</div><div class="c dt">12-24</div><div class="c gi"><svg class="gg"><use href="#ch"/></svg></div></div>
<div class="rw R gr" style="top:126px"><div class="c nm" style="color:#e60012">0.2%-0.25%重熔棒<br>（湖北）</div><div class="c rg">22010~22050</div><div class="c av">22030</div><div class="c yi"><svg class="yy"><use href="#yn"/></svg></div><div class="c ch">+150</div><div class="c un">元/吨</div><div class="c dt">12-24</div><div class="c gi"><svg class="gg"><use href="#ch"/></svg></div></div>
<div class="rw R" style="top:193px"><div class="c nm">0.25%-0.35%重熔棒<br>（湖北）</div><div class="c rg">21960~22000</div><div class="c av">21980</div><div class="c yi"><svg class="yy"><use href="#yn"/></svg></div><div class="c ch">+150</div><div class="c un">元/吨</div><div class="c dt">12-24</div><div class="c gi"><svg class="gg"><use href="#ch"/></svg></div></div>
</div>

<!-- 19 Semiconductor -->
<div class="sec" style="top:4637px;left:20px;height:238px">
<div class="wm" style="left:60px;top:120px">SMM 上海有色网</div><div class="wm" style="left:580px;top:120px">SMM 上海有色网</div>
<div class="red" style="width:275px"></div>
<div class="tt">今日半导体现货价格</div>
<div class="sel" style="left:536px;width:166px">晶片<svg><use href="#dn"/></svg></div>
<svg class="hi" style="left:720px"><use href="#ck"/></svg><div class="hl" style="left:751px">历史价格</div>
<svg class="hi" style="left:849px"><use href="#fs"/></svg><div class="hl" style="left:877px">全屏查看</div>
<div class="rw K" style="top:37px"><div class="c nm">4寸砷化镓衬底</div><div class="c rg">145~245</div><div class="c av">195</div><div class="c yi"><svg class="yy"><use href="#yn"/></svg></div><div class="c ch">0</div><div class="c un">元/片</div><div class="c dt">12-24</div><div class="c gi"><svg class="gg"><use href="#ch"/></svg></div></div>
<div class="rw K gr" style="top:104px"><div class="c nm">6寸砷化镓衬底</div><div class="c rg">545~845</div><div class="c av">695</div><div class="c yi"><svg class="yy"><use href="#yn"/></svg></div><div class="c ch">0</div><div class="c un">元/片</div><div class="c dt">12-24</div><div class="c gi"><svg class="gg"><use href="#ch"/></svg></div></div>
<div class="rw K" style="top:171px"><div class="c nm">2寸锑化镓衬底</div><div class="c rg">2800~3000</div><div class="c av">2900</div><div class="c yi"><svg class="yy"><use href="#yn"/></svg></div><div class="c ch">0</div><div class="c un">元/片</div><div class="c dt">12-24</div><div class="c gi"><svg class="gg"><use href="#ch"/></svg></div></div>
</div>

</body></html>
